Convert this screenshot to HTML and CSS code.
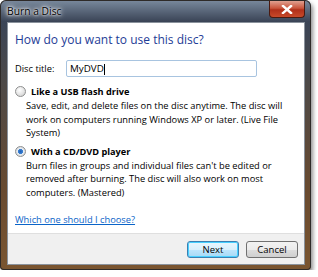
FILE: index.html
```html
<!DOCTYPE html>
<html lang="en">
<head>
    <meta charset="UTF-8">
    <title>Burn a Disc</title>
    <link rel="stylesheet" href="styles.css">
</head>
<body>

<div class="window">
    <div class="titlebar">
        <span class="title">Burn a Disc</span>
        <button class="close" type="button">
            <svg width="12" height="9" viewBox="0 0 12 9">
                <path d="M2 1 L10 8 M10 1 L2 8" stroke="#fff" stroke-width="2.4" stroke-linecap="square"/>
            </svg>
        </button>
    </div>

    <div class="client">
        <div class="content">
            <h2>How do you want to use this disc?</h2>

            <div class="field">
                <label for="titulo">Disc title:</label>
                <div class="input">MyDVD<span class="caret"></span></div>
            </div>

            <div class="option">
                <div class="option-head">
                    <span class="radio"></span>
                    <span class="option-title">Like a USB flash drive</span>
                </div>
                <p>Save, edit, and delete files on the disc anytime. The disc will<br>work on computers running Windows XP or later. (Live File<br>System)</p>
            </div>

            <div class="option">
                <div class="option-head">
                    <span class="radio checked"></span>
                    <span class="option-title">With a CD/DVD player</span>
                </div>
                <p>Burn files in groups and individual files can't be edited or<br>removed after burning. The disc will also work on most<br>computers. (Mastered)</p>
            </div>

            <a class="help" href="#">Which one should I choose?</a>
        </div>

        <div class="footer">
            <button class="btn default" type="button">Next</button>
            <button class="btn" type="button">Cancel</button>
        </div>
    </div>
</div>

</body>
</html>
```

FILE: styles.css
```css
body {
    font-family: "Open Sans", "Noto Sans", sans-serif;
    background-color: #fff;
    margin: 0;
    padding: 0;
}
.window {
    width: 311px;
    height: 270px;
    box-sizing: border-box;
    padding: 0 6px 5px 7px;
    display: flex;
    flex-direction: column;
    border-radius: 6px 6px 4px 4px;
    background: linear-gradient(to bottom, #7a8a9e 0%, #3a4456 8%, #4c4948 30%, #684a30 70%, #7a5530 100%);
    box-shadow: 2px 3px 4px rgba(0, 0, 0, 0.45), inset 0 0 0 1px #2e2a28;
}
.titlebar {
    height: 22px;
    display: flex;
    justify-content: space-between;
    align-items: flex-start;
}
.title {
    font-size: 10.3px;
    line-height: 22px;
    color: #000;
    text-shadow: 0 0 6px #fff, 0 0 4px #fff, 0 0 2px #fff;
}
.close {
    width: 36px;
    height: 17px;
    margin-top: 1px;
    border: 1px solid #4a1a10;
    border-top: none;
    border-radius: 0 0 4px 4px;
    background: linear-gradient(to bottom, #e0a090 0%, #c9553c 45%, #b0301a 55%, #c84a2a 100%);
    display: flex;
    align-items: center;
    justify-content: center;
    padding: 0;
}
.client {
    flex: 1;
    display: flex;
    flex-direction: column;
    background-color: #fff;
    border: 1px solid #8a929c;
}
.content {
    flex: 1;
    padding: 8px 0 0 7px;
    font-size: 9.3px;
    color: #000;
}
h2 {
    margin: 0 0 12px 0;
    font-size: 12px;
    font-weight: normal;
    color: #1e3c96;
}
.field {
    display: flex;
    align-items: center;
    margin-bottom: 7px;
}
.field label {
    width: 51px;
}
.input {
    width: 183px;
    height: 15px;
    border: 1px solid #a8c4e0;
    border-radius: 2px;
    padding: 0 3px;
    line-height: 15px;
    font-size: 9.8px;
}
.caret {
    display: inline-block;
    width: 1px;
    height: 11px;
    background: #000;
    vertical-align: middle;
}
.option {
    margin-bottom: 4px;
}
.option-head {
    display: flex;
    align-items: center;
    gap: 5px;
    height: 15px;
}
.option-title {
    font-weight: bold;
    font-size: 9.2px;
}
.radio {
    width: 9px;
    height: 9px;
    border-radius: 50%;
    border: 1px solid #8e8f8f;
    background: radial-gradient(circle at 40% 35%, #fff 0%, #e6e6e6 50%, #c8c8c8 100%);
}
.radio.checked {
    background: radial-gradient(circle, #1f5fb8 0%, #3a7fd0 35%, #e8eef4 45%, #c8c8c8 100%);
}
.option p {
    margin: 0 0 0 11px;
    line-height: 13.5px;
    white-space: nowrap;
}
.help {
    display: block;
    margin-top: 14px;
    color: #0a64c8;
}
.footer {
    height: 31px;
    box-sizing: border-box;
    background-color: #f0f0f0;
    border-top: 1px solid #dfdfdf;
    display: flex;
    justify-content: flex-end;
    align-items: center;
    gap: 7px;
    padding-right: 6px;
}
.btn {
    width: 52px;
    height: 17px;
    padding: 0;
    font-family: "Open Sans", sans-serif;
    font-size: 9.5px;
    color: #000;
    border: 1px solid #707070;
    border-radius: 3px;
    background: linear-gradient(to bottom, #f2f2f2 0%, #ebebeb 50%, #dddddd 51%, #cfcfcf 100%);
}
.btn.default {
    border-color: #3c7fb1;
    box-shadow: inset 0 0 0 1px #48d0ff;
    background: linear-gradient(to bottom, #eaf6fd 0%, #d9f0fc 50%, #bee6fd 51%, #a7d9f5 100%);
}
```
